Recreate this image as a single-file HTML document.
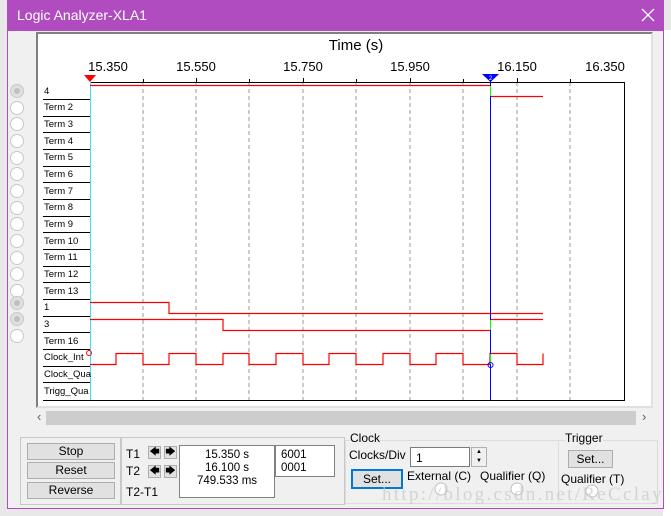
<!DOCTYPE html>
<html><head><style>
body{margin:0;width:671px;height:516px;background:#e8e8e8;position:relative;overflow:hidden;font-family:"Liberation Sans",sans-serif;}
.a{position:absolute;}
.btn{position:absolute;background:#e1e1e1;border:1px solid #adadad;font-size:12px;text-align:center;box-sizing:border-box;color:#000;}
.t{position:absolute;font-size:12px;color:#000;white-space:nowrap;}
.lab{position:absolute;left:44px;font-size:9.5px;color:#000;}
</style></head><body>
<div class="a" style="left:663px;top:30px;width:8px;height:486px;background:#fff"></div>
<div class="a" style="left:7px;top:0;width:657px;height:509px;background:#f0f0f0;border:1px solid #b04cc0;border-top:none;box-sizing:border-box"></div>
<div class="a" style="left:7px;top:0;width:657px;height:31px;background:#b04cc0"></div>
<div class="t" style="left:17px;top:7px;color:#fff;font-size:14px">Logic Analyzer-XLA1</div>
<svg class="a" style="left:641px;top:8px" width="14" height="14"><path d="M1 1L13 13M13 1L1 13" stroke="#fff" stroke-width="1.3"/></svg>
<div class="a" style="left:36px;top:32px;width:617px;height:376px;background:#fff;border:2px solid #808080;border-right-color:#e0e0e0;border-bottom-color:#e0e0e0;box-sizing:border-box"></div>
<svg class="a" style="left:0;top:0" width="671" height="516">
<text x="356" y="50" font-size="15" text-anchor="middle" font-family="Liberation Sans">Time (s)</text>
<g font-size="13" font-family="Liberation Sans" text-anchor="middle">
<text x="108" y="71">15.350</text><text x="196" y="71">15.550</text><text x="303" y="71">15.750</text><text x="410" y="71">15.950</text><text x="517" y="71">16.150</text><text x="605" y="71">16.350</text></g>
<g stroke="#999" stroke-dasharray="4,3">
<line x1="143" y1="82" x2="143" y2="400"/><line x1="196" y1="82" x2="196" y2="400"/><line x1="249" y1="82" x2="249" y2="400"/><line x1="303" y1="82" x2="303" y2="400"/><line x1="356" y1="82" x2="356" y2="400"/><line x1="410" y1="82" x2="410" y2="400"/><line x1="463" y1="82" x2="463" y2="400"/><line x1="517" y1="82" x2="517" y2="400"/><line x1="570" y1="82" x2="570" y2="400"/></g>
<g stroke="#000"><line x1="90" y1="82.5" x2="625" y2="82.5"/><line x1="624.5" y1="82" x2="624.5" y2="400"/><line x1="43" y1="400.5" x2="625" y2="400.5"/>
<line x1="196.5" y1="78" x2="196.5" y2="82"/><line x1="303.5" y1="78" x2="303.5" y2="82"/><line x1="410.5" y1="78" x2="410.5" y2="82"/><line x1="517.5" y1="78" x2="517.5" y2="82"/><line x1="143.5" y1="79" x2="143.5" y2="82"/><line x1="249.5" y1="79" x2="249.5" y2="82"/><line x1="356.5" y1="79" x2="356.5" y2="82"/><line x1="463.5" y1="79" x2="463.5" y2="82"/><line x1="570.5" y1="79" x2="570.5" y2="82"/>
<line x1="43" y1="99.5" x2="90" y2="99.5"/><line x1="43" y1="116.5" x2="90" y2="116.5"/><line x1="43" y1="132.5" x2="90" y2="132.5"/><line x1="43" y1="149.5" x2="90" y2="149.5"/><line x1="43" y1="166.5" x2="90" y2="166.5"/><line x1="43" y1="182.5" x2="90" y2="182.5"/><line x1="43" y1="199.5" x2="90" y2="199.5"/><line x1="43" y1="216.5" x2="90" y2="216.5"/><line x1="43" y1="232.5" x2="90" y2="232.5"/><line x1="43" y1="249.5" x2="90" y2="249.5"/><line x1="43" y1="266.5" x2="90" y2="266.5"/><line x1="43" y1="282.5" x2="90" y2="282.5"/><line x1="43" y1="299.5" x2="90" y2="299.5"/><line x1="43" y1="316.5" x2="90" y2="316.5"/><line x1="43" y1="332.5" x2="90" y2="332.5"/><line x1="43" y1="349.5" x2="90" y2="349.5"/><line x1="43" y1="366.5" x2="90" y2="366.5"/><line x1="43" y1="382.5" x2="90" y2="382.5"/></g>
<line x1="90.5" y1="82" x2="90.5" y2="400" stroke="#3ee0f0"/>
<g stroke="#f00" fill="none" stroke-width="1.2">
<line x1="90" y1="85.5" x2="490" y2="85.5"/><line x1="490" y1="96.5" x2="543" y2="96.5"/>
<polyline points="90,302.5 169,302.5 169,313.5 543,313.5"/>
<polyline points="90,319.5 223,319.5 223,330.5 490,330.5"/><line x1="490" y1="319.5" x2="543" y2="319.5"/>
<polyline points="90,364.5 116,364.5 116,353.5 143,353.5 143,364.5 169,364.5 169,353.5 196,353.5 196,364.5 223,364.5 223,353.5 249,353.5 249,364.5 276,364.5 276,353.5 303,353.5 303,364.5 329,364.5 329,353.5 356,353.5 356,364.5 383,364.5 383,353.5 410,353.5 410,364.5 436,364.5 436,353.5 463,353.5 463,364.5 490,364.5 490,353.5 517,353.5 517,364.5 543,364.5 543,353.5"/>
<circle cx="89" cy="353" r="2.5" stroke-width="1"/></g>
<line x1="490.5" y1="75" x2="490.5" y2="400" stroke="#00f"/>
<g stroke="#0f0"><line x1="490.5" y1="86" x2="490.5" y2="96"/><line x1="490.5" y1="320" x2="490.5" y2="330"/><line x1="490.5" y1="354" x2="490.5" y2="364"/></g>
<circle cx="490.5" cy="365" r="2.5" stroke="#00f" fill="none"/>
<polygon points="84,75 96,75 90,82" fill="#f00"/>
<polygon points="482,74 499,74 490.5,82" fill="#00f"/><text x="490.5" y="80" font-size="6" fill="#fff" text-anchor="middle">2</text>
<g fill="#fff" stroke="#c8c8c8">
<circle cx="17" cy="91" r="6.5" fill="#e0e0e0"/><circle cx="17" cy="108" r="6.5"/><circle cx="17" cy="124" r="6.5"/><circle cx="17" cy="141" r="6.5"/><circle cx="17" cy="158" r="6.5"/><circle cx="17" cy="174" r="6.5"/><circle cx="17" cy="191" r="6.5"/><circle cx="17" cy="208" r="6.5"/><circle cx="17" cy="224" r="6.5"/><circle cx="17" cy="241" r="6.5"/><circle cx="17" cy="258" r="6.5"/><circle cx="17" cy="274" r="6.5"/><circle cx="17" cy="291" r="6.5"/><circle cx="17" cy="303" r="6.5" fill="#e0e0e0"/><circle cx="17" cy="319" r="6.5" fill="#e0e0e0"/><circle cx="17" cy="336" r="6.5"/></g>
<g fill="#c0c0c0"><circle cx="17" cy="91" r="3"/><circle cx="17" cy="303" r="3"/><circle cx="17" cy="319" r="3"/></g>
</svg>
<div class="lab" style="top:86px">4</div><div class="lab" style="top:102px">Term 2</div><div class="lab" style="top:119px">Term 3</div><div class="lab" style="top:136px">Term 4</div><div class="lab" style="top:152px">Term 5</div><div class="lab" style="top:169px">Term 6</div><div class="lab" style="top:186px">Term 7</div><div class="lab" style="top:202px">Term 8</div><div class="lab" style="top:219px">Term 9</div><div class="lab" style="top:236px">Term 10</div><div class="lab" style="top:252px">Term 11</div><div class="lab" style="top:269px">Term 12</div><div class="lab" style="top:286px">Term 13</div><div class="lab" style="top:302px">1</div><div class="lab" style="top:319px">3</div><div class="lab" style="top:336px">Term 16</div><div class="lab" style="top:352px">Clock_Int</div><div class="lab" style="top:369px">Clock_Qua</div><div class="lab" style="top:386px">Trigg_Qua</div>
<div class="a" style="left:36px;top:410px;width:600px;height:16px;background:#f0f0f0"></div>
<div class="a" style="left:46px;top:411px;width:590px;height:14px;background:#cdcdcd"></div>
<div class="t" style="left:37px;top:409px;color:#606060;font-size:13px">‹</div>
<div class="t" style="left:642px;top:409px;color:#606060;font-size:13px">›</div>
<div class="a" style="left:20px;top:437px;width:100px;height:66px;border:1px solid #c8c8c8"></div>
<div class="a" style="left:120px;top:437px;width:223px;height:66px;border:1px solid #c8c8c8"></div>
<div class="btn" style="left:27px;top:443px;width:88px;height:17px">Stop</div>
<div class="btn" style="left:27px;top:462px;width:88px;height:17px">Reset</div>
<div class="btn" style="left:27px;top:482px;width:88px;height:17px">Reverse</div>
<div class="t" style="left:126px;top:447px">T1</div><div class="t" style="left:126px;top:464px">T2</div><div class="t" style="left:126px;top:485px">T2-T1</div>
<div class="btn" style="left:148px;top:446px;width:13px;height:13px;font-size:10px;line-height:12px">🡄</div>
<div class="btn" style="left:164px;top:446px;width:13px;height:13px;font-size:10px;line-height:12px">🡆</div>
<div class="btn" style="left:148px;top:465px;width:13px;height:13px;font-size:10px;line-height:12px">🡄</div>
<div class="btn" style="left:164px;top:465px;width:13px;height:13px;font-size:10px;line-height:12px">🡆</div>
<div class="a" style="left:179px;top:445px;width:96px;height:53px;background:#fff;border:1px solid #808080;box-sizing:border-box;font-size:11.5px;text-align:center;line-height:13px;padding-top:3px">15.350 s<br>16.100 s<br>749.533 ms</div>
<div class="a" style="left:275px;top:445px;width:60px;height:32px;background:#fff;border:1px solid #808080;box-sizing:border-box;font-size:11.5px;line-height:13px;padding:3px 0 0 5px">6001<br>0001</div>
<div class="a" style="left:345px;top:440px;width:311px;height:62px;border:1px solid #dcdcdc"></div>
<div class="a" style="left:558px;top:440px;width:0;height:62px;border-left:1px solid #dcdcdc"></div>
<div class="t" style="left:350px;top:431px;background:#f0f0f0">Clock</div>
<div class="t" style="left:565px;top:431px;background:#f0f0f0">Trigger</div>
<div class="t" style="left:349px;top:448px">Clocks/Div</div>
<div class="a" style="left:410px;top:447px;width:60px;height:20px;background:#fff;border:1px solid #7a7a7a;box-sizing:border-box;font-size:12px;padding:3px 5px">1</div>
<div class="a" style="left:471px;top:447px;width:16px;height:20px;border:1px solid #b0b0b0;box-sizing:border-box;font-size:6px;text-align:center;line-height:9px">▲<br>▼</div>
<div class="btn" style="left:351px;top:469px;width:52px;height:20px;border:2px solid #0078d7;line-height:16px">Set...</div>
<div class="t" style="left:407px;top:469px">External (C)</div>
<div class="t" style="left:480px;top:469px">Qualifier (Q)</div>
<div class="btn" style="left:568px;top:450px;width:45px;height:18px;line-height:16px">Set...</div>
<div class="t" style="left:561px;top:472px">Qualifier (T)</div>
<svg class="a" style="left:0;top:0" width="671" height="516"><g fill="#fff" stroke="#c0c0c0"><circle cx="441" cy="489" r="6"/><circle cx="517" cy="489" r="6"/><circle cx="592" cy="491" r="6"/></g></svg>
<div class="t" style="left:382px;top:484px;font-family:'Liberation Serif',serif;font-size:19px;letter-spacing:2.3px;color:rgba(200,200,200,0.7)">http://blog.csdn.net/ReCclay</div>
</body></html>
